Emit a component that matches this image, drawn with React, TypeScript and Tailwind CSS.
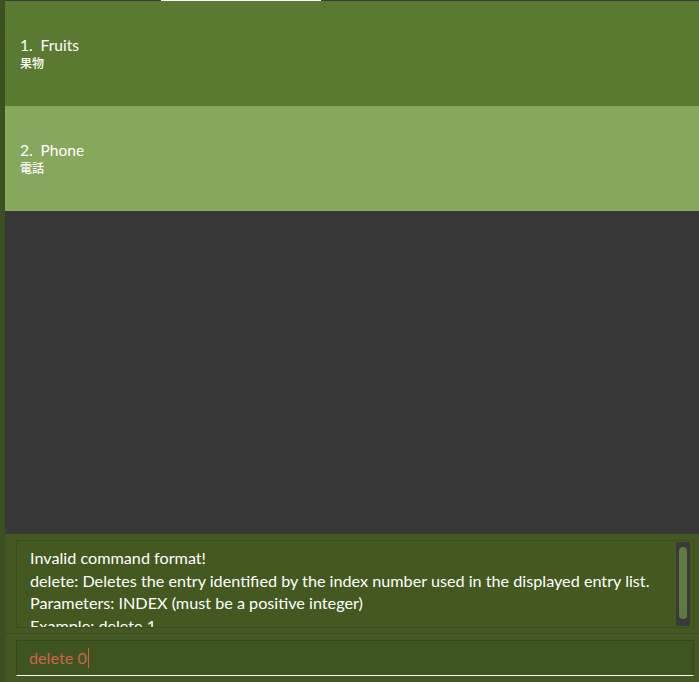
export default function App() {
  const entries = [
    { id: 1, title: 'Fruits', sub: '果物', bg: 'bg-[#5b7a31]' },
    { id: 2, title: 'Phone', sub: '電話', bg: 'bg-[#87a75d]' },
  ];

  return (
    <div
      className="flex h-[682px] w-[699px] overflow-hidden bg-[#435822] text-white"
      style={{ fontFamily: 'Lato, "Noto Sans CJK JP", sans-serif' }}
    >
      {/* left edge */}
      <div className="w-[5px] shrink-0 bg-[#3c5121]" />

      <div className="flex min-w-0 flex-1 flex-col">
        {/* top tab line */}
        <div className="flex h-px shrink-0 bg-[#3c3c3c]">
          <div className="ml-[156px] w-[160px] bg-white" />
        </div>

        {/* entry list */}
        {entries.map((e) => (
          <div key={e.id} className={`flex h-[105px] shrink-0 flex-col justify-center pb-px pl-[15px] ${e.bg}`}>
            <p className="whitespace-pre text-[15.5px] leading-[20px]">
              {e.id}.  {e.title}
            </p>
            <p className="mt-[2px] text-[12px] font-medium leading-[14px]">{e.sub}</p>
          </div>
        ))}
        <div className="h-[323px] shrink-0 bg-[#383838]" />

        {/* result display */}
        <div className="border-b border-[#3a4e1d] pb-[5px] pl-[11px] pr-[5px] pt-[6px]">
          <div className="flex h-[88px] border border-[#3a4f1c] bg-[#43591f]">
            <div className="flex-1 overflow-hidden whitespace-nowrap pl-[13px] pt-[6px] text-[16.2px] leading-[22.5px]">
              <p>Invalid command format!</p>
              <p>delete: Deletes the entry identified by the index number used in the displayed entry list.</p>
              <p>Parameters: INDEX (must be a positive integer)</p>
              <p>Example: delete 1</p>
            </div>
            <div className="my-px mr-[3px] w-[14px] bg-[#3a3a3a] px-[3px] pt-[5px]">
              <div className="h-[72px] rounded-[4px] bg-[#5f7a42]" />
            </div>
          </div>
        </div>

        {/* command box */}
        <div className="pl-[11px] pr-[5px] pt-[6px]">
          <div className="flex h-[36px] items-center whitespace-nowrap border border-[#34481a] border-b-white bg-[#3f5520] pl-[12px]">
            <span className="text-[16.2px] leading-[20px] text-[#d0634a]">delete 0</span>
            <span className="ml-px h-[20px] w-px shrink-0 bg-[#d0634a]" />
          </div>
        </div>
      </div>
    </div>
  );
}
